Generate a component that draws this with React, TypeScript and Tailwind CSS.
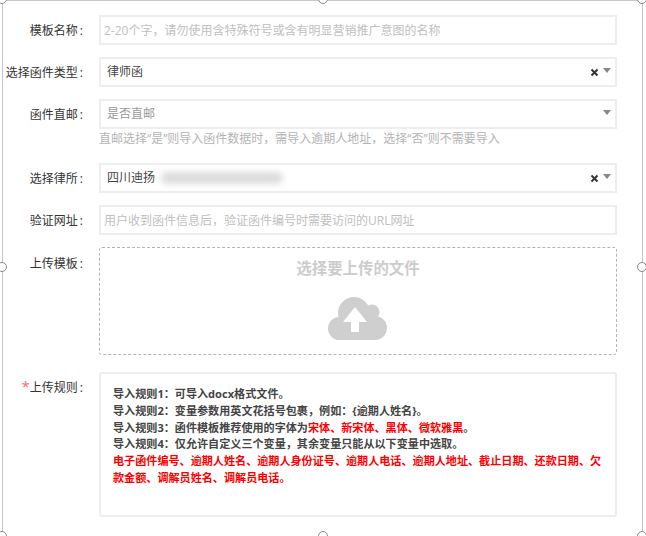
import React from "react";

const font = { fontFamily: '"Open Sans", "Noto Sans CJK SC", "Liberation Sans", sans-serif' };

function Caret() {
  return <span className="w-0 h-0 border-x-[4px] border-x-transparent border-t-[5px] border-t-[#888888]" />;
}

function Clear() {
  return (
    <svg width="9" height="9" viewBox="0 0 9 9" className="block">
      <path d="M1.5 1.5 L7.5 7.5 M7.5 1.5 L1.5 7.5" stroke="#333" strokeWidth="2" />
    </svg>
  );
}

function Label({ children, star }: { children: React.ReactNode; star?: boolean }) {
  return (
    <div className="w-[83px] h-[30px] shrink-0 text-right text-[12px] leading-[32px] text-[#333333] whitespace-nowrap">
      {star && <span className="text-[15px] leading-[12px] text-[#f56c6c]">*</span>}
      {children}
      <span className="ml-[2px]">:</span>
    </div>
  );
}

function InputBox({ text }: { text: string }) {
  return (
    <div className="h-[30px] w-[518px] border-2 border-[#eeeeee] pl-[3px] text-[12px] leading-[28px] text-[#c0c0c0] whitespace-nowrap">
      {text}
    </div>
  );
}

function SelectBox({ children, clear }: { children: React.ReactNode; clear?: boolean }) {
  return (
    <div className="h-[30px] w-[518px] border-2 border-[#eeeeee] pl-[6px] pr-[4px] flex items-center text-[12px] text-[#444444] whitespace-nowrap">
      <div className="flex-1 flex items-center">{children}</div>
      {clear && <span className="mr-[4px] mt-[1px]"><Clear /></span>}
      <span className="-mt-[3px] flex"><Caret /></span>
    </div>
  );
}

function Handle({ className }: { className: string }) {
  return <span className={`absolute w-[10px] h-[10px] rounded-full border border-[#888888] bg-white ${className}`} />;
}

export default function App() {
  return (
    <div className="relative w-[646px] h-[536px] overflow-hidden bg-white" style={font}>
      <div className="flex flex-col pt-[15px]">
        <div className="flex gap-[16px]">
          <Label>模板名称</Label>
          <InputBox text="2-20个字，请勿使用含特殊符号或含有明显营销推广意图的名称" />
        </div>
        <div className="flex gap-[16px] mt-[12px]">
          <Label>选择函件类型</Label>
          <SelectBox clear>律师函</SelectBox>
        </div>
        <div className="flex gap-[16px] mt-[12px]">
          <Label>函件直邮</Label>
          <div className="flex flex-col">
            <SelectBox><span className="text-[#999999]">是否直邮</span></SelectBox>
            <div className="text-[12px] leading-[17px] mt-[1px] text-[#b4b4b4] whitespace-nowrap">
              直邮选择“是”则导入函件数据时，需导入逾期人地址，选择“否”则不需要导入
            </div>
          </div>
        </div>
        <div className="flex gap-[16px] mt-[16px]">
          <Label>选择律所</Label>
          <SelectBox clear>
            <span>四川迪扬</span>
            <span className="ml-[6px] h-[12px] w-[122px] rounded-full bg-[#dcdcdc] blur-[3px]" />
          </SelectBox>
        </div>
        <div className="flex gap-[16px] mt-[12px]">
          <Label>验证网址</Label>
          <InputBox text="用户收到函件信息后，验证函件编号时需要访问的URL网址" />
        </div>
        <div className="flex gap-[16px] mt-[12px]">
          <div className="pt-[1px]"><Label>上传模板</Label></div>
          <div className="h-[108px] w-[518px] border border-dashed border-[#b4b4b4] rounded-[3px] flex flex-col items-center">
            <div className="mt-[9px] text-[15.4px] leading-[24px] font-bold text-[#cccccc]">选择要上传的文件</div>
            <svg width="60" height="44" viewBox="0 0 60 44" className="mt-[16px] block">
              <g fill="#cfcfcf">
                <circle cx="26" cy="16" r="16" />
                <circle cx="44" cy="15" r="7.5" />
                <circle cx="47" cy="31" r="12" />
                <circle cx="11.5" cy="31.5" r="11.5" />
                <rect x="11" y="24" width="36" height="19" />
              </g>
              <path fill="#ffffff" d="M27 10 L39 25 L31 25 L31 35 L23 35 L23 25 L15 25 Z" />
            </svg>
          </div>
        </div>
        <div className="flex gap-[16px] mt-[17px]">
          <Label star>上传规则</Label>
          <div className="h-[145px] w-[518px] border-2 border-[#eeeeee] rounded-[3px] pt-[12px] pl-[12px] pr-[10px] text-[11.1px] leading-[16.8px] font-bold text-[#444444]">
            <div>导入规则1：可导入docx格式文件。</div>
            <div>导入规则2：变量参数用英文花括号包裹，例如：{"{逾期人姓名}"}。</div>
            <div>
              导入规则3：函件模板推荐使用的字体为<span className="text-[#ff0000]">宋体、新宋体、黑体、微软雅黑</span>。
            </div>
            <div>导入规则4：仅允许自定义三个变量，其余变量只能从以下变量中选取。</div>
            <div className="text-[#ff0000]">
              电子函件编号、逾期人姓名、逾期人身份证号、逾期人电话、逾期人地址、截止日期、还款日期、欠款金额、调解员姓名、调解员电话。
            </div>
          </div>
        </div>
      </div>

      <div className="absolute left-[2px] top-0 bottom-0 w-px bg-[#c4c4d0]" />
      <div className="absolute left-[642px] top-0 bottom-0 w-px bg-[#c4c4c4]" />
      <div className="absolute left-0 right-0 top-0 h-px bg-[#c8c8c8]" />
      <Handle className="-left-[3px] -top-[6px]" />
      <Handle className="left-[318px] -top-[6px]" />
      <Handle className="left-[637px] -top-[6px]" />
      <Handle className="-left-[3px] top-[262px]" />
      <Handle className="left-[637px] top-[262px]" />
      <Handle className="-left-[3px] top-[531px]" />
      <Handle className="left-[318px] top-[531px]" />
      <Handle className="left-[637px] top-[531px]" />
    </div>
  );
}
